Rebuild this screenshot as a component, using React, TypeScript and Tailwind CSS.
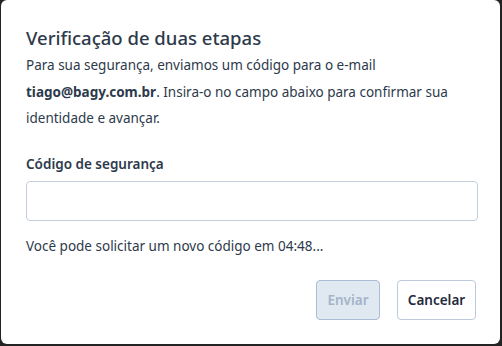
export default function App() {
  return (
    <div className="w-[502px] h-[346px] bg-[#232323] pl-px" style={{ fontFamily: '"Noto Sans", "Open Sans", sans-serif' }}>
      <div className="w-[499px] h-[344px] bg-white rounded-md px-6 pt-6 pb-6 flex flex-col">
        <h1 className="text-[18.5px] leading-7 font-medium text-[#2d3a4b] ml-px">Verificação de duas etapas</h1>
        <p className="text-[13.5px] leading-[26.5px] text-[#2d3a4b] ml-px">
          Para sua segurança, enviamos um código para o e-mail{" "}
          <span className="font-bold">tiago@bagy.com.br</span>. Insira-o no campo abaixo para confirmar sua identidade e avançar.
        </p>
        <label className="mt-[22px] text-[13.5px] font-semibold text-[#2d3a4b] ml-px">Código de segurança</label>
        <input className="mt-[7px] h-[40px] w-[452px] border border-[#c3cfdd] rounded-[4px] ml-px" />
        <p className="mt-[15px] text-[13.5px] text-[#2d3a4b] ml-px">Você pode solicitar um novo código em 04:48...</p>
        <div className="mt-auto flex justify-end gap-[17px]">
          <button className="h-[40px] w-[64px] rounded-[4px] border border-[#a9bdd5] bg-[#e0e8f1] text-[13.5px] font-semibold text-[#a3b4c8]">
            Enviar
          </button>
          <button className="h-[40px] w-[79px] rounded-[4px] border border-[#bccadb] bg-white text-[13.5px] font-semibold text-[#1f2b3b]">
            Cancelar
          </button>
        </div>
      </div>
    </div>
  );
}
